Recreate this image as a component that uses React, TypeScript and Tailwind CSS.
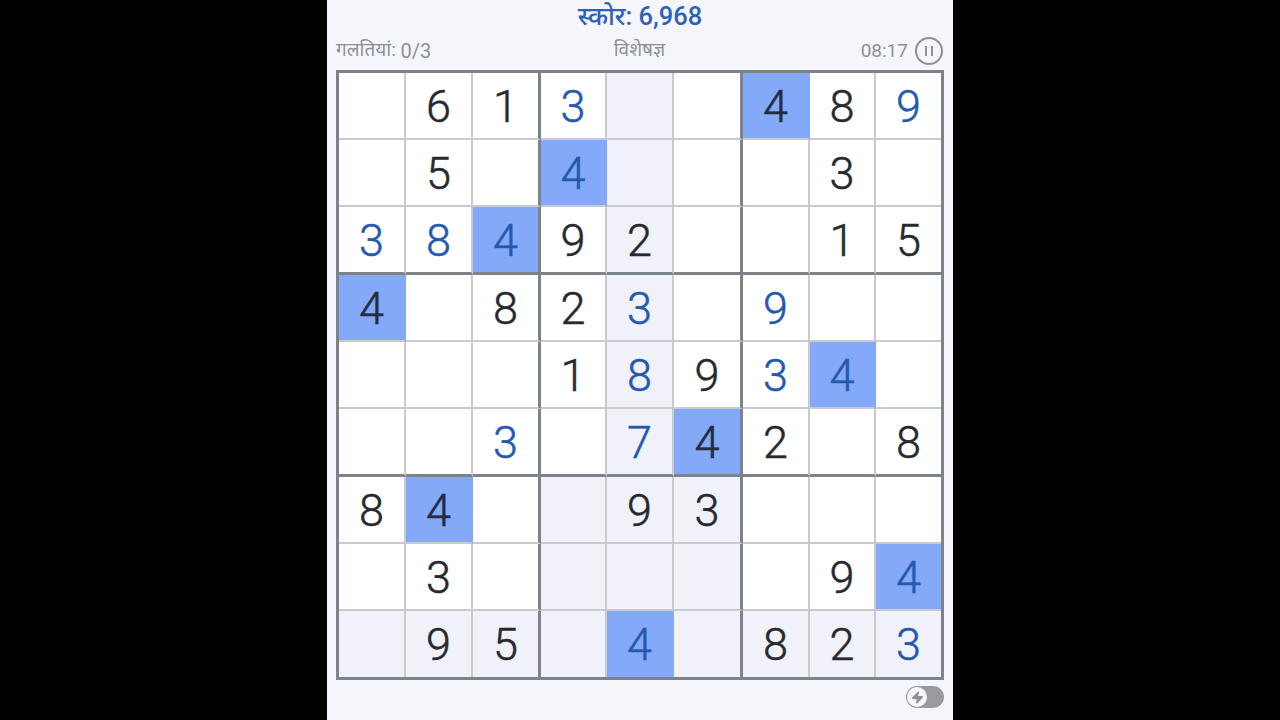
import { Zap } from "lucide-react";

// b = user entered (blue), h = highlighted, s = shaded
const rows = [
  ["", "6", "1", "3b", "s", "", "4h", "8", "9b"],
  ["", "5", "", "4bh", "s", "", "", "3", ""],
  ["3b", "8b", "4bh", "9", "2s", "", "", "1", "5"],
  ["4h", "", "8", "2", "3bs", "", "9b", "", ""],
  ["", "", "", "1", "8bs", "9", "3b", "4bh", ""],
  ["", "", "3b", "", "7bs", "4h", "2", "", "8"],
  ["8", "4h", "", "s", "9s", "3s", "", "", ""],
  ["", "3", "", "s", "s", "s", "", "9", "4bh"],
  ["s", "9s", "5s", "s", "4bh", "s", "8s", "2s", "3bs"],
];

function Cell({ value, col, row }: { value: string; col: number; row: number }) {
  const digit = value.replace(/[a-z]/g, "");
  const blue = value.includes("b");
  const highlighted = value.includes("h");
  const shaded = value.includes("s");

  return (
    <div
      className={`flex items-center justify-center box-border pt-[1px] text-[45px] font-light [-webkit-text-stroke:0.5px_currentColor] leading-none ${
        col === 8
          ? ""
          : col === 2 || col === 5
            ? "border-r-[3px] border-r-[#7e8289]"
            : highlighted
              ? "border-r-2 border-r-[#84a9f8]"
              : "border-r-2 border-r-[#c8cacf]"
      } ${
        row === 8 ? "" : row === 2 || row === 5 ? "border-b-[3px] border-b-[#7e8289]" : "border-b-2 border-b-[#c8cacf]"
      } ${highlighted ? "bg-[#84a9f8]" : shaded ? "bg-[#f0f1f9]" : "bg-white"} ${
        blue ? "text-[#2459b0]" : highlighted ? "text-[#232c40]" : "text-[#26292e]"
      }`}
    >
      {digit}
    </div>
  );
}

export default function App() {
  return (
    <div className="flex justify-center w-full h-screen bg-black overflow-hidden font-['Roboto','Noto_Sans',sans-serif]">
      <div className="w-[626px] h-full bg-[#f5f6fc] flex flex-col">
        <div className="h-[32px] flex items-center justify-center text-[25.5px] font-medium text-[#2d62b8]">
          स्कोर: 6,968
        </div>
        <div className="h-[38px] pl-[9px] pr-[10px] flex items-center justify-between text-[#8d9097]">
          <div className="w-[200px] text-[19px]">
            गलतियां: <span className="text-[20px] align-[-2px]">0/3</span>
          </div>
          <div className="text-[19px] -mt-[1px]">विशेषज्ञ</div>
          <div className="w-[200px] flex items-center justify-end gap-[7px] text-[19px]">
            08:17
            <span className="w-[28px] h-[28px] rounded-full border-2 border-[#8d9097] flex items-center justify-center gap-[4px]">
              <span className="w-[2px] h-[10px] bg-[#8d9097]" />
              <span className="w-[2px] h-[10px] bg-[#8d9097]" />
            </span>
          </div>
        </div>
        <div className="ml-[9px] w-[608px] h-[610px] box-border border-[3px] border-[#7e8289] grid grid-cols-[67px_67px_68px_66px_67px_69px_67px_66px_65px] grid-rows-[67px_67px_68px_67px_67px_68px_67px_67px_66px]">
          {rows.map((row, r) =>
            row.map((value, c) => <Cell key={`${r}-${c}`} value={value} col={c} row={r} />)
          )}
        </div>
        <div className="pt-[6px] pr-[9px] flex justify-end">
          <div className="w-[38px] h-[22px] rounded-full bg-[#9a9ba0] flex items-center pl-[1px]">
            <span className="w-[20px] h-[20px] rounded-full bg-[#f7f7f9] flex items-center justify-center">
              <Zap size={13} className="text-[#8f9096] fill-[#8f9096]" />
            </span>
          </div>
        </div>
      </div>
    </div>
  );
}
